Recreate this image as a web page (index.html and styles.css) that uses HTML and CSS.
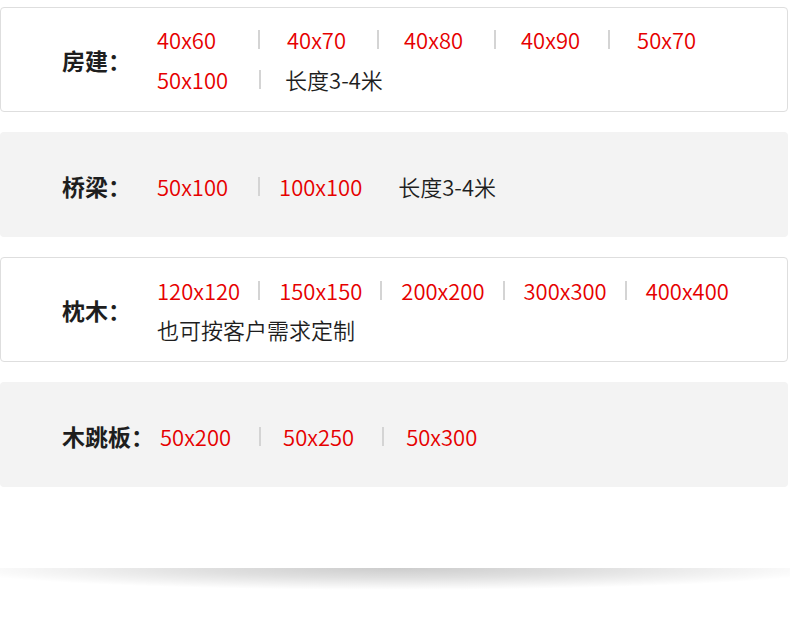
FILE: index.html
```html
<!DOCTYPE html>
<html lang="zh">
<head>
<meta charset="utf-8">
<title>规格</title>
<link rel="stylesheet" href="styles.css">
</head>
<body>
<div class="page">
  <section class="card card-white card-first">
    <div class="label">房建：</div>
    <div class="rows">
      <div class="row row-wide">
        <span class="item">40x60</span><span class="sep sep-first"></span>
        <span class="item">40x70</span><span class="sep"></span>
        <span class="item">40x80</span><span class="sep"></span>
        <span class="item">40x90</span><span class="sep sep-last"></span>
        <span class="item">50x70</span>
      </div>
      <div class="row row-line2 row-wide">
        <span class="item">50x100</span><span class="sep sep-note"></span>
        <span class="note">长度3-4米</span>
      </div>
    </div>
  </section>

  <section class="card card-grey">
    <div class="label">桥梁：</div>
    <div class="rows">
      <div class="row row-bridge">
        <span class="item">50x100</span><span class="sep"></span>
        <span class="item">100x100</span>
        <span class="note note-gap">长度3-4米</span>
      </div>
    </div>
  </section>

  <section class="card card-white">
    <div class="label">枕木：</div>
    <div class="rows">
      <div class="row row-tight">
        <span class="item">120x120</span><span class="sep"></span>
        <span class="item">150x150</span><span class="sep"></span>
        <span class="item">200x200</span><span class="sep"></span>
        <span class="item">300x300</span><span class="sep"></span>
        <span class="item">400x400</span>
      </div>
      <div class="row">
        <span class="note">也可按客户需求定制</span>
      </div>
    </div>
  </section>

  <section class="card card-grey">
    <div class="label">木跳板：</div>
    <div class="rows">
      <div class="row row-plank">
        <span class="item">50x200</span><span class="sep"></span>
        <span class="item">50x250</span><span class="sep"></span>
        <span class="item">50x300</span>
      </div>
    </div>
  </section>

  <div class="spacer"></div>
  <div class="shadow"></div>
</div>
</body>
</html>
```

FILE: styles.css
```css
* { box-sizing: border-box; }

html, body {
  margin: 0;
  padding: 0;
  background: #ffffff;
}

body {
  font-family: "Noto Sans CJK SC", "Noto Sans", sans-serif;
  color: #222222;
}

.page {
  width: 790px;
  padding-top: 7px;
}

.card {
  width: 788px;
  height: 105px;
  margin-bottom: 20px;
  padding: 3px 0 0 62px;
  display: flex;
  align-items: center;
  border-radius: 4px;
}

.card-white {
  background: #ffffff;
  border: 1px solid #dedede;
  padding-left: 61px;
  padding-top: 1px;
}

.card-first {
  padding-top: 0;
}

.card-grey {
  background: #f3f3f3;
}

.label {
  flex-shrink: 0;
  min-width: 89px;
  margin-right: 6px;
  font-size: 23px;
  font-weight: 700;
  color: #1e1e1e;
  white-space: nowrap;
}

.rows {
  display: flex;
  flex-direction: column;
}

.row {
  display: flex;
  align-items: center;
  height: 39px;
  white-space: nowrap;
}

.row-line2 {
  margin-top: 1px;
}

.item {
  font-size: 22px;
  font-weight: 350;
  color: #e60000;
  line-height: 39px;
}

.note {
  font-size: 22px;
  font-weight: 350;
  color: #1e1e1e;
  line-height: 39px;
}

.note-gap {
  margin-left: 36px;
}

.sep {
  width: 2px;
  height: 19px;
  background: #d4d4d4;
}

.row-wide .sep {
  margin: 0 25px 0 31px;
}

.row-wide .sep-first {
  margin: 0 27px 0 42px;
}

.row-wide .sep-last {
  margin: 0 27px 0 28px;
}

.row-wide .sep-note {
  margin: 0 24px 0 31px;
}

.row-bridge .sep {
  margin: 0 19px 0 30px;
}

.row-tight .sep {
  margin: 0 19px 0 18px;
}

.row-plank .sep {
  margin: 0 22px 0 28px;
}

.spacer {
  height: 61px;
}

.shadow {
  height: 22px;
  background: radial-gradient(ellipse 56% 100% at 50% 0, rgba(0, 0, 0, 0.2) 0%, rgba(0, 0, 0, 0.12) 45%, rgba(0, 0, 0, 0) 100%);
}
```
